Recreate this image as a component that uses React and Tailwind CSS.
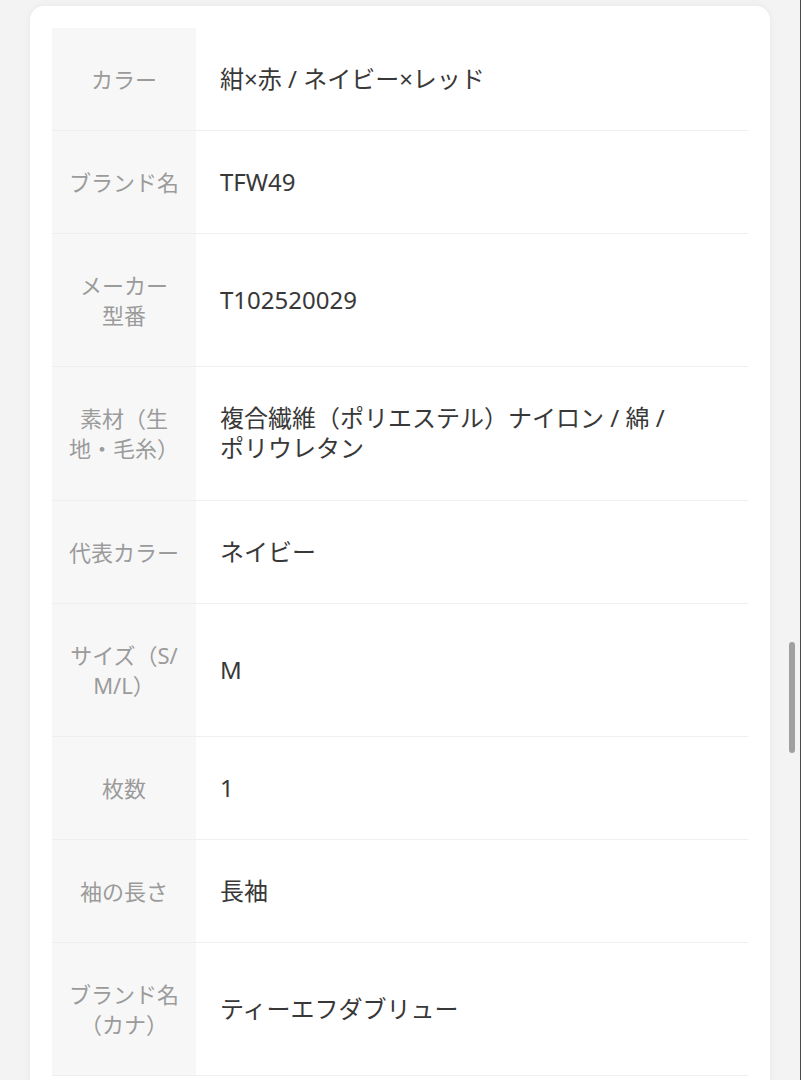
const ROWS = [
  { label: 'カラー', value: '紺×赤 / ネイビー×レッド' },
  { label: 'ブランド名', value: 'TFW49' },
  { label: ['メーカー', '型番'], value: 'T102520029' },
  { label: ['素材（生', '地・毛糸）'], value: ['複合繊維（ポリエステル）ナイロン / 綿 /', 'ポリウレタン'] },
  { label: '代表カラー', value: 'ネイビー' },
  { label: ['サイズ（S/', 'M/L）'], value: 'M' },
  { label: '枚数', value: '1' },
  { label: '袖の長さ', value: '長袖' },
  { label: ['ブランド名', '（カナ）'], value: 'ティーエフダブリュー' },
];

function Lines({ text }) {
  if (!Array.isArray(text)) return text;
  return text.map((t, i) => (
    <span key={i} className="block">{t}</span>
  ));
}

export default function App() {
  return (
    <div
      className="relative h-[1080px] overflow-hidden border-r border-[#4a4a4a] bg-[#f3f3f3] pl-[30px] pr-[30px] pt-[6px]"
      style={{ fontFamily: '"Noto Sans", "Noto Sans CJK JP", sans-serif' }}
    >
      <div className="min-h-[1200px] w-[740px] rounded-[14px] bg-white px-[22px] pt-[22px] shadow-[0_0_8px_rgba(0,0,0,0.05)]">
        {/* Spec table */}
        <div>
          {ROWS.map((r, i) => (
            <div key={i} className="flex border-b border-[#efefef]">
              <div className="flex w-[144px] shrink-0 items-center justify-center bg-[#f7f7f7] px-3 pt-[36px] pb-[36.15px] text-center text-[22px] leading-[30px] text-[#9b9b9b]">
                <div><Lines text={r.label} /></div>
              </div>
              <div className="flex flex-1 items-center pl-[24px] pr-[40px] pt-[36px] pb-[36.15px] text-[24px] leading-[30px] text-[#383838]">
                <div><Lines text={r.value} /></div>
              </div>
            </div>
          ))}
        </div>
      </div>

      {/* overlay scrollbar */}
      <div className="absolute left-[789px] top-[642px] h-[111px] w-[6px] rounded-full bg-[#a0a0a0]" />
    </div>
  );
}
